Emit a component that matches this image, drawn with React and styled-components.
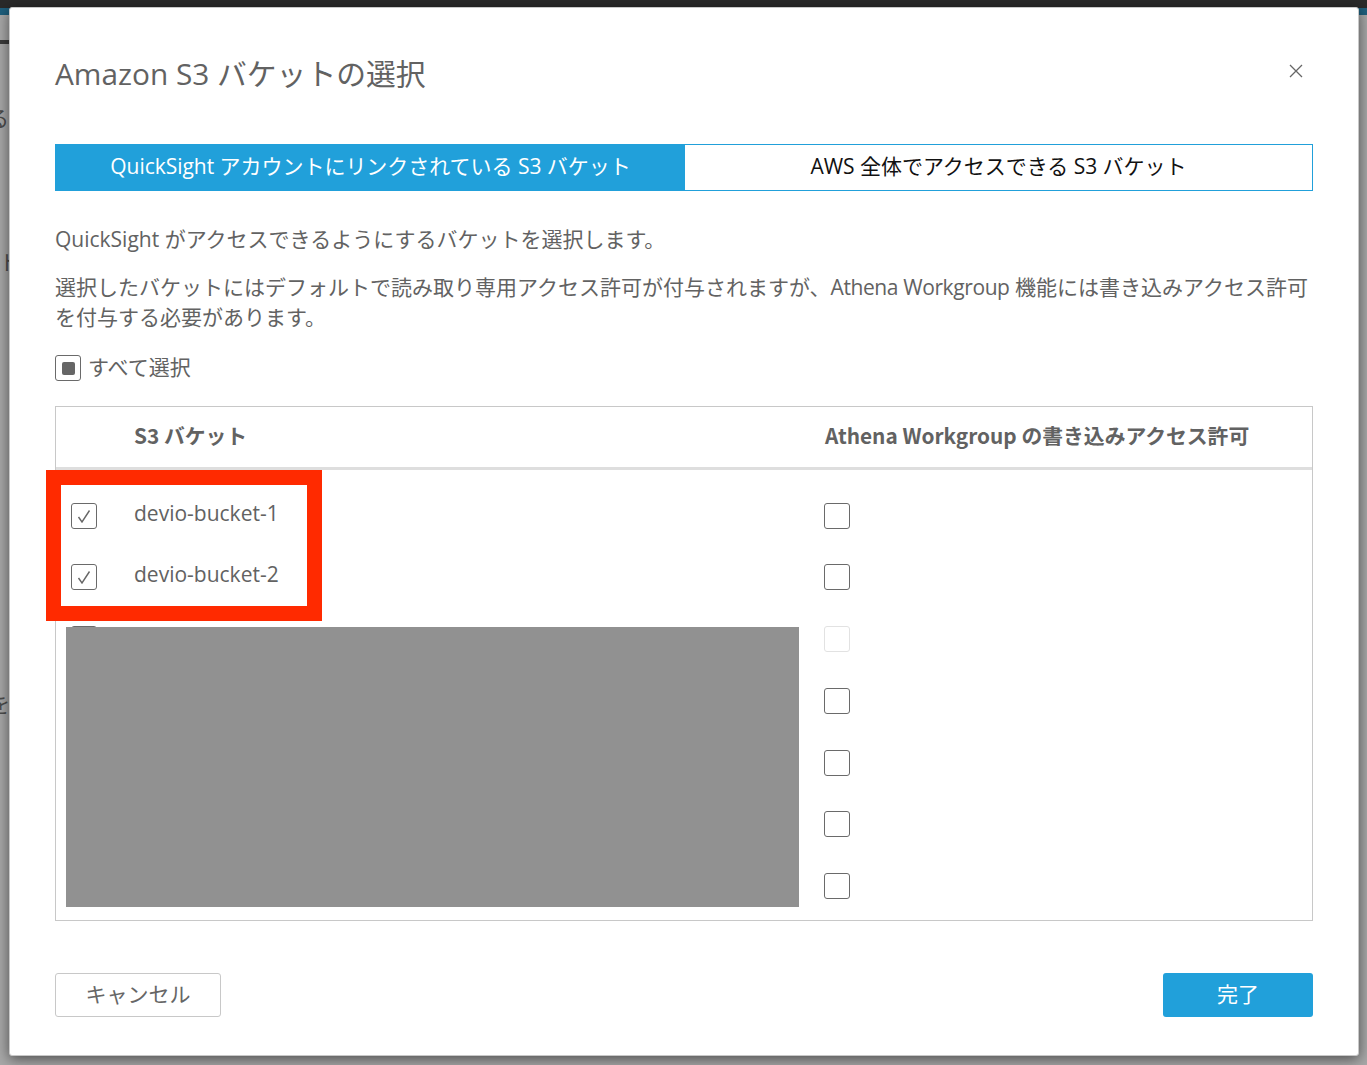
import styled, { createGlobalStyle } from "styled-components";

const GlobalStyle = createGlobalStyle`
  html, body {
    margin: 0;
    padding: 0;
    height: 100%;
    background: #a8a8a8;
  }
  * {
    box-sizing: border-box;
  }
`;

const FONT = `"Open Sans", "Noto Sans CJK JP", sans-serif`;

const Page = styled.div`
  position: relative;
  width: 1367px;
  height: 1065px;
  overflow: hidden;
  background: #a8a8a8;
  font-family: ${FONT};
  color: #626262;
`;

const TopBar = styled.div`
  height: 8px;
  background: #2a2a2a;
`;

const NavStrip = styled.div`
  height: 7px;
  background: #1f5f7d;
`;

const BackLine = styled.div`
  height: 4px;
  width: 10px;
  margin-top: 25px;
  background: #3c3c3c;
`;

const BackText = styled.div`
  width: 10px;
  height: 24px;
  margin-top: ${(props) => props.top}px;
  margin-left: ${(props) => props.left}px;
  font-size: 21px;
  line-height: 24px;
  white-space: nowrap;
  color: #4c4c4c;
`;

const Modal = styled.div`
  position: absolute;
  left: 9px;
  top: 7px;
  width: 1350px;
  height: 1049px;
  display: flex;
  flex-direction: column;
  padding: 0 45px;
  background: #fff;
  border: 1px solid #c8c8c8;
  border-radius: 3px;
  box-shadow: 0 3px 14px rgba(0, 0, 0, 0.55);
`;

const Header = styled.div`
  height: 136px;
  display: flex;
  justify-content: space-between;
  align-items: flex-start;
`;

const Title = styled.h1`
  margin: 46px 0 0;
  font-size: 29.8px;
  line-height: 40px;
  font-weight: 400;
  color: #626262;
`;

const CloseButton = styled.button`
  display: flex;
  margin: 56px 10px 0 0;
  padding: 0;
  border: none;
  background: none;
  color: #666;
`;

const Tabs = styled.div`
  display: flex;
  height: 47px;
  border: 1px solid #21a0da;
`;

const Tab = styled.div`
  width: ${(props) => (props.$active ? "629px" : "auto")};
  flex: ${(props) => (props.$active ? "none" : "1")};
  display: flex;
  align-items: center;
  justify-content: center;
  padding-bottom: 5px;
  font-size: 21px;
  letter-spacing: -0.03px;
  color: ${(props) => (props.$active ? "#fff" : "#111")};
  background: ${(props) => (props.$active ? "#21a0da" : "#fff")};
`;

const Intro = styled.p`
  margin: ${(props) => props.$top}px 0 0;
  font-size: 21px;
  line-height: 30px;
  color: #626262;
`;

const NarrowLatin = styled.span`
  letter-spacing: -0.4px;
`;

const SelectAll = styled.label`
  display: flex;
  align-items: center;
  gap: 7px;
  margin-top: 21px;
  height: 30px;
  font-size: 21px;
  line-height: 26px;
`;

const SelectAllText = styled.span`
  margin-top: -2px;
`;

const Box = styled.span`
  flex: none;
  width: 26px;
  height: 26px;
  display: flex;
  align-items: center;
  justify-content: center;
  border: 1.5px solid ${(props) => (props.$disabled ? "#e2e2e2" : "#6a6a6a")};
  border-radius: 3px;
  background: #fff;
  color: #666;
`;

const Indeterminate = styled.span`
  width: 13px;
  height: 13px;
  border-radius: 2px;
  background: #666;
`;

const Table = styled.div`
  margin-top: 23px;
  height: 515px;
  border: 1px solid #c8c8c8;
  display: flex;
  flex-direction: column;
`;

const HeadRow = styled.div`
  height: 63px;
  flex: none;
  display: grid;
  grid-template-columns: 78px 691px 1fr;
  align-items: center;
  padding-bottom: 4px;
  border-bottom: 3px solid #dedede;
  font-family: "Noto Sans CJK JP", sans-serif;
  font-size: 20.8px;
  font-weight: 700;
`;

const Body = styled.div`
  position: relative;
  flex: 1;
  display: flex;
  flex-direction: column;
  padding-top: 14.7px;
`;

const Row = styled.div`
  height: 61.75px;
  flex: none;
  display: grid;
  grid-template-columns: 78px 690px 1fr;
  align-items: center;
`;

const FirstCell = styled.div`
  padding-left: 15px;
  display: flex;
`;

const BucketName = styled.div`
  font-size: 21px;
  line-height: 30px;
  margin-top: -6px;
`;

const Redaction = styled.div`
  position: absolute;
  left: 10px;
  top: 157px;
  width: 733px;
  height: 280px;
  background: #919191;
`;

const Highlight = styled.div`
  position: absolute;
  left: -10px;
  top: 0;
  width: 276px;
  height: 151px;
  border: 15px solid #ff2a00;
`;

const Footer = styled.div`
  margin-top: 52px;
  display: flex;
  justify-content: space-between;
`;

const CancelButton = styled.button`
  width: 166px;
  height: 44px;
  padding: 0 0 5px;
  border: 1px solid #c8c8c8;
  border-radius: 3px;
  background: #fff;
  color: #666;
  font-family: ${FONT};
  font-size: 21px;
`;

const DoneButton = styled.button`
  width: 150px;
  height: 44px;
  padding: 0 0 5px;
  border: none;
  border-radius: 3px;
  background: #21a0da;
  color: #fff;
  font-family: ${FONT};
  font-size: 21px;
`;

const rows = [
  { name: "devio-bucket-1", checked: true },
  { name: "devio-bucket-2", checked: true },
  { disabled: true },
  {},
  {},
  {},
  {},
];

function Check() {
  return (
    <svg width="14" height="14" viewBox="0 0 14 14" fill="none" stroke="currentColor" strokeWidth="1.4">
      <path d="M1.5 8 L5 13 L12.5 1.5" />
    </svg>
  );
}

export default function App() {
  return (
    <Page>
      <GlobalStyle />
      <TopBar />
      <NavStrip />
      <BackLine />
      <BackText top={62} left={-12}>る</BackText>
      <BackText top={120} left={-1}>ト</BackText>
      <BackText top={418} left={-11}>を</BackText>

      <Modal>
        <Header>
          <Title>Amazon S3 バケットの選択</Title>
          <CloseButton aria-label="close">
            <svg width="14" height="14" viewBox="0 0 14 14" stroke="currentColor" strokeWidth="1.3">
              <path d="M1 1 L13 13 M13 1 L1 13" />
            </svg>
          </CloseButton>
        </Header>

        <Tabs>
          <Tab $active>QuickSight アカウントにリンクされている S3 バケット</Tab>
          <Tab>AWS 全体でアクセスできる S3 バケット</Tab>
        </Tabs>

        <Intro $top={33}>QuickSight がアクセスできるようにするバケットを選択します。</Intro>
        <Intro $top={18}>
          選択したバケットにはデフォルトで読み取り専用アクセス許可が付与されますが、
          <NarrowLatin>Athena Workgroup</NarrowLatin> 機能には書き込みアクセス許可を付与する必要があります。
        </Intro>

        <SelectAll>
          <Box>
            <Indeterminate />
          </Box>
          <SelectAllText>すべて選択</SelectAllText>
        </SelectAll>

        <Table>
          <HeadRow>
            <span />
            <span>S3 バケット</span>
            <span>Athena Workgroup の書き込みアクセス許可</span>
          </HeadRow>
          <Body>
            {rows.map((row, i) => (
              <Row key={i}>
                <FirstCell>
                  <Box>{row.checked && <Check />}</Box>
                </FirstCell>
                <BucketName>{row.name}</BucketName>
                <Box $disabled={row.disabled} />
              </Row>
            ))}
            <Redaction />
            <Highlight />
          </Body>
        </Table>

        <Footer>
          <CancelButton>キャンセル</CancelButton>
          <DoneButton>完了</DoneButton>
        </Footer>
      </Modal>
    </Page>
  );
}
